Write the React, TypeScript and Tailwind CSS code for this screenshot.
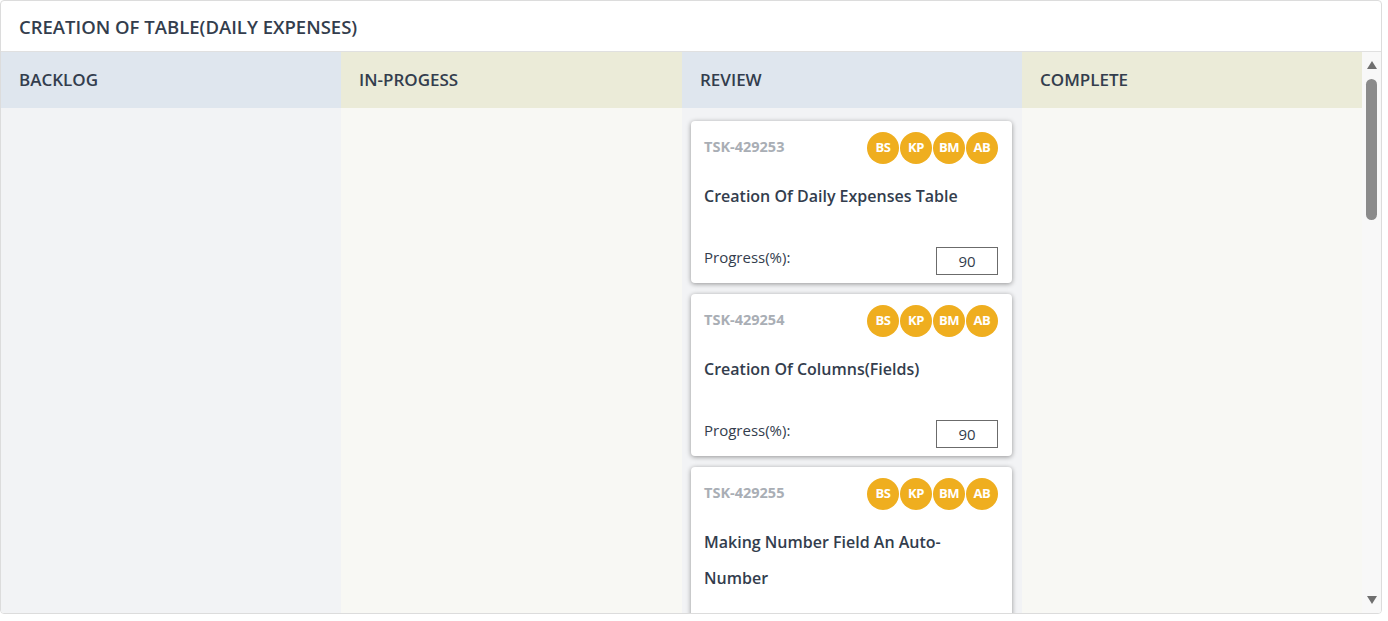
import React from "react";

type Task = { id: string; title: string; progress: number };

const columns = [
  { key: "backlog", title: "BACKLOG", head: "bg-[#dfe6ee]", body: "bg-[#f2f3f5]", w: "w-[340px]" },
  { key: "progress", title: "IN-PROGESS", head: "bg-[#ebebd8]", body: "bg-[#f8f8f4]", w: "w-[341px]" },
  { key: "review", title: "REVIEW", head: "bg-[#dfe6ee]", body: "bg-[#f2f3f5]", w: "w-[340px]" },
  { key: "complete", title: "COMPLETE", head: "bg-[#ebebd8]", body: "bg-[#f8f8f4]", w: "w-[341px]" },
];

const reviewTasks: Task[] = [
  { id: "TSK-429253", title: "Creation Of Daily Expenses Table", progress: 90 },
  { id: "TSK-429254", title: "Creation Of Columns(Fields)", progress: 90 },
  { id: "TSK-429255", title: "Making Number Field An Auto-Number", progress: 90 },
];

const members = ["BS", "KP", "BM", "AB"];

function TaskCard({ task }: { task: Task }) {
  return (
    <div className="bg-white rounded-[4px] shadow-[0_1px_5px_rgba(0,0,0,0.4)] pt-[11px] pb-[8px] pl-[13px] pr-[14px] w-[321px] shrink-0">
      <div className="flex items-center justify-between h-8">
        <span className="text-[14.5px] font-bold text-[#a9aeb5] -mt-[2px]">{task.id}</span>
        <div className="flex gap-[1px]">
          {members.map((m) => (
            <span
              key={m}
              className="w-8 h-8 rounded-full bg-[#efae1f] text-white text-[13px] font-bold flex items-center justify-center tracking-[-0.4px]"
            >
              {m}
            </span>
          ))}
        </div>
      </div>
      <div className="mt-[14px] text-[16px] font-semibold text-[#333d4d] leading-[36px] pr-[10px]">{task.title}</div>
      <div className="flex justify-between items-start mt-[33px]">
        <span className="text-[15px] text-[#333d4d] leading-[21px]">Progress(%):</span>
        <div className="w-[62px] h-[28px] border border-[#6b6b6b] flex items-center justify-center text-[15px] text-[#333d4d]">
          {task.progress}
        </div>
      </div>
    </div>
  );
}

export default function App() {
  return (
    <div className="w-[1388px] h-[621px] bg-white" style={{ fontFamily: '"Open Sans", "Noto Sans", sans-serif' }}>
      <div className="w-[1382px] h-[614px] border border-[#dcdcdc] rounded-[4px] flex flex-col overflow-hidden">
        <div className="h-[51px] shrink-0 border-b border-[#e0e0e0] flex items-center px-[18px] pt-[2px]">
          <h1 className="text-[18.5px] font-semibold text-[#333d4d]">CREATION OF TABLE(DAILY EXPENSES)</h1>
        </div>
        <div className="flex flex-1 min-h-0">
          <div className="flex flex-1 min-w-0">
            {columns.map((c) => (
              <div key={c.key} className={`${c.w} flex flex-col shrink-0`}>
                <div className={`${c.head} h-[56px] shrink-0 flex items-center px-[18px]`}>
                  <span className="text-[17px] font-semibold text-[#333d4d]">{c.title}</span>
                </div>
                <div className={`${c.body} flex-1 min-h-0 overflow-hidden`}>
                  {c.key === "review" && (
                    <div className="flex flex-col gap-[11px] pt-[13px] pl-[9px]">
                      {reviewTasks.map((t) => (
                        <TaskCard key={t.id} task={t} />
                      ))}
                    </div>
                  )}
                </div>
              </div>
            ))}
          </div>
          <div className="w-[19px] shrink-0 bg-[#f8f8f8] flex flex-col items-center pt-[9px] pb-[9px]">
            <svg width="10" height="8" viewBox="0 0 10 8" className="shrink-0">
              <path d="M5 0 L10 8 L0 8 Z" fill="#6f6f6f" />
            </svg>
            <div className="w-[11px] h-[141px] mt-[10px] rounded-full bg-[#8b8b8b]" />
            <div className="flex-1" />
            <svg width="10" height="8" viewBox="0 0 10 8" className="shrink-0">
              <path d="M0 0 L10 0 L5 8 Z" fill="#6f6f6f" />
            </svg>
          </div>
        </div>
      </div>
    </div>
  );
}
